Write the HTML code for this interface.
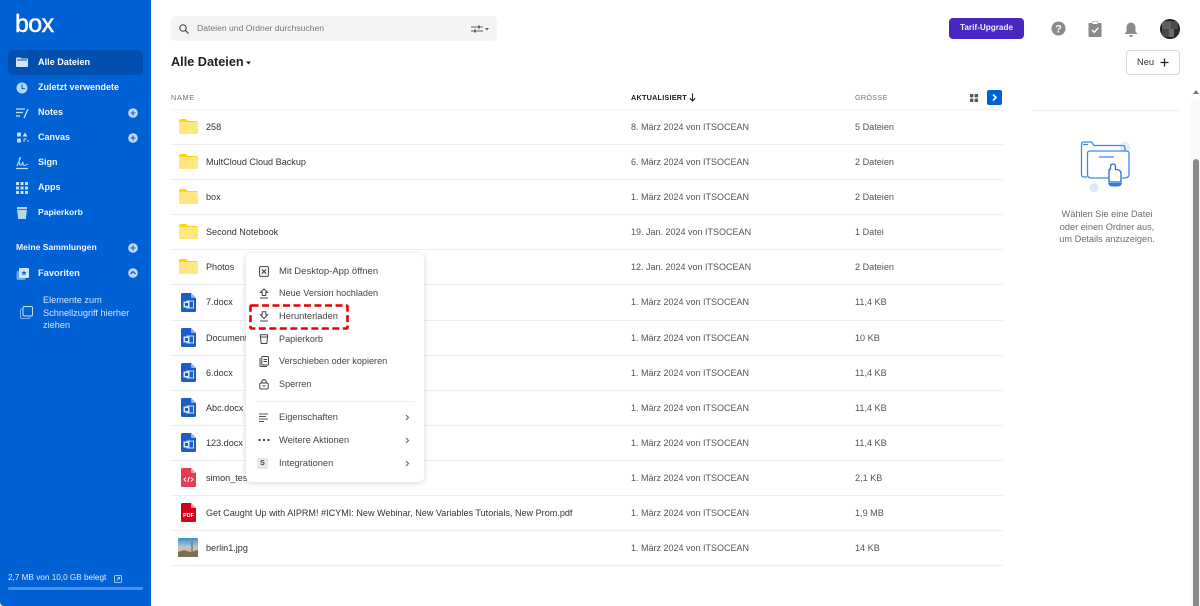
<!DOCTYPE html>
<html lang="de"><head><meta charset="utf-8"><title>Box</title>
<style>
*{box-sizing:border-box}
html,body{margin:0;padding:0;width:1200px;height:606px;overflow:hidden;background:#fff;font-family:"Liberation Sans",sans-serif;color:#222}
.a{position:absolute;white-space:nowrap}
#side{left:0;top:0;width:151px;height:606px;background:#0061d5;border-radius:0 0 0 4px}
.nav{position:absolute;left:38px;color:#f0f5fc;font-size:9px;font-weight:bold;white-space:nowrap;line-height:12px}
.ic{position:absolute}
.rl{position:absolute;left:171px;width:832px;height:1px;background:#eee}
.n{position:absolute;left:206px;font-size:9.08px;color:#333;line-height:12px;white-space:nowrap;margin-top:1px}
.d{position:absolute;left:631px;font-size:9px;color:#555;line-height:12px;white-space:nowrap;margin-top:1px}
.s{position:absolute;left:855px;font-size:9.1px;color:#555;line-height:12px;white-space:nowrap;margin-top:1px}
.m{position:absolute;left:279px;font-size:9.1px;color:#444;line-height:12px;white-space:nowrap}
.f{position:absolute;left:179px;width:19px;height:15px}
.w{position:absolute;left:181px;width:15px;height:19px}
</style></head><body>

<div class="a" id="side"></div>
<div class="a" style="left:15px;top:6px;font-size:25px;font-weight:normal;color:#fff;letter-spacing:-.6px;line-height:36px;-webkit-text-stroke:.5px #fff">box</div>
<div class="a" style="left:8px;top:50px;width:135px;height:25px;background:#0150b0;border-radius:5px"></div>

<svg class="ic" style="left:16px;top:57px" width="12" height="10"><path d="M0 1.500Q0 .5 1 .5H4.500L5.500 1.500H11Q12 1.500 12 2.500V9Q12 10 11 10H1Q0 10 0 9Z" fill="#d4e5f9"/><rect x="1" y="2.500" width="10" height="1" fill="#0150b0"/></svg>
<div class="nav" style="top:56px;color:#fff;font-size:9.1px">Alle Dateien</div>

<svg class="ic" style="left:16px;top:82px" width="12" height="12"><circle cx="6" cy="6" r="5.500" fill="#b9d5f5"/><path d="M6 2.500V6.500H9" stroke="#0061d5" fill="none" stroke-width="1.100"/></svg>
<div class="nav" style="top:81px">Zuletzt verwendete</div>

<svg class="ic" style="left:15px;top:107px" width="14" height="12"><path d="M1 2H10M1 5.500H8M1 9H5M13 2L9 11" stroke="#c9def7" fill="none" stroke-width="1.300"/></svg>
<div class="nav" style="top:106px">Notes</div>
<svg class="ic" style="left:128px;top:108px" width="10" height="10"><circle cx="5" cy="5" r="4.800" fill="#c4daf6"/><path d="M5 2.500V7.500M2.500 5H7.500" stroke="#0061d5" stroke-width="1.100"/></svg>

<svg class="ic" style="left:17px;top:132px" width="12" height="11"><rect x="0" y="0.500" width="4" height="4" rx=".8" fill="#c9def7"/><path d="M8 .5L10.500 4.500H5.500Z" fill="#c9def7"/><rect x="0" y="6.500" width="4" height="4" rx=".8" fill="#c9def7"/><path d="M7 7H9.500M7 7V10M11 8V10" stroke="#c9def7" fill="none"/></svg>
<div class="nav" style="top:131px">Canvas</div>
<svg class="ic" style="left:128px;top:133px" width="10" height="10"><circle cx="5" cy="5" r="4.800" fill="#c4daf6"/><path d="M5 2.500V7.500M2.500 5H7.500" stroke="#0061d5" stroke-width="1.100"/></svg>

<svg class="ic" style="left:15px;top:156px" width="14" height="14"><path d="M2 10Q6 1 5.500 1.500Q3.500 2 4.500 8Q5 10 7 8L8 6V9Q10 10 13 8" stroke="#c9def7" fill="none"/><path d="M1 12.500H13" stroke="#c9def7" stroke-width="1.200"/></svg>
<div class="nav" style="top:156px">Sign</div>

<svg class="ic" style="left:16px;top:182px" width="12" height="12" fill="#c9def7"><rect width="3" height="3"/><rect x="4.500" width="3" height="3"/><rect x="9" width="3" height="3"/><rect y="4.500" width="3" height="3"/><rect x="4.500" y="4.500" width="3" height="3"/><rect x="9" y="4.500" width="3" height="3"/><rect y="9" width="3" height="3"/><rect x="4.500" y="9" width="3" height="3"/><rect x="9" y="9" width="3" height="3"/></svg>
<div class="nav" style="top:181px">Apps</div>

<svg class="ic" style="left:17px;top:207px" width="10" height="12"><path d="M0 0H10V2.500L8.800 12H1.200L0 2.500Z" fill="#b9d5f5"/><rect y="2" width="10" height=".8" fill="#0061d5"/></svg>
<div class="nav" style="top:206px;font-size:8.6px">Papierkorb</div>

<div class="nav" style="left:16px;top:241px;font-size:8.6px">Meine Sammlungen</div>
<svg class="ic" style="left:128px;top:243px" width="10" height="10"><circle cx="5" cy="5" r="4.800" fill="#c4daf6"/><path d="M5 2.500V7.500M2.500 5H7.500" stroke="#0061d5" stroke-width="1.100"/></svg>

<svg class="ic" style="left:16px;top:268px" width="13" height="13"><rect x="0.500" y="3" width="9" height="9" rx="1.500" fill="#6fa3e6"/><rect x="3" y="0" width="10" height="10" rx="1" fill="#d4e5f9"/><path d="M8 2.200L8.800 4.200H10.800L9.200 5.400L9.800 7.400L8 6.200L6.200 7.400L6.800 5.400L5.200 4.200H7.200Z" fill="#0061d5"/></svg>
<div class="nav" style="top:267px;font-size:9.3px">Favoriten</div>
<svg class="ic" style="left:128px;top:268px" width="10" height="10"><circle cx="5" cy="5" r="4.800" fill="#c4daf6"/><path d="M2.500 6L5 3.500L7.500 6" stroke="#0061d5" fill="none" stroke-width="1.300"/></svg>

<svg class="ic" style="left:20px;top:306px" width="13" height="13"><rect x="3" y=".5" width="9.500" height="9.500" rx="1.500" fill="none" stroke="#cfe1f8"/><path d="M3 3H2Q.5 3 .5 4.500V11Q.5 12.500 2 12.500H8.500Q10 12.500 10 11" fill="none" stroke="#7fb0ea"/></svg>
<div class="nav" style="left:43px;top:294px;font-weight:normal;color:#d4e5f9;font-size:9.2px;line-height:12.700px">Elemente zum<br>Schnellzugriff hierher<br>ziehen</div>

<div class="nav" style="left:8px;top:572px;font-weight:normal;color:#e3eefb;font-size:8.2px">2,7 MB von 10,0 GB belegt</div>
<svg class="ic" style="left:114px;top:575px" width="8" height="8"><rect x=".5" y=".5" width="7" height="7" rx="1" fill="none" stroke="#d4e5f9" stroke-width=".8"/><path d="M2.500 5.500L5.500 2.500M3.500 2.500H5.500V4.500" fill="none" stroke="#d4e5f9" stroke-width=".8"/></svg>
<div class="a" style="left:8px;top:587px;width:135px;height:3px;background:#4d90e2;border-radius:2px"></div>

<!-- search -->
<div class="a" style="left:171px;top:16px;width:326px;height:25px;background:#f4f4f4;border-radius:5px"></div>
<svg class="ic" style="left:179px;top:24px" width="10" height="10"><circle cx="4" cy="4" r="3.200" fill="none" stroke="#555" stroke-width="1.200"/><path d="M6.500 6.500L9.500 9.500" stroke="#555" stroke-width="1.300"/></svg>
<div class="a" style="left:197px;top:22px;font-size:8.6px;color:#777;line-height:12px">Dateien und Ordner durchsuchen</div>
<svg class="ic" style="left:471px;top:25px" width="19" height="8"><path d="M0 2H12M0 6H12" stroke="#666"/><rect x="7" y=".5" width="2" height="3" fill="#666"/><rect x="3" y="4.500" width="2" height="3" fill="#666"/><path d="M14 3H18L16 5.500Z" fill="#666"/></svg>

<div class="a" style="left:171px;top:53px;font-size:12.7px;font-weight:bold;color:#222;line-height:18px">Alle Dateien</div>
<svg class="ic" style="left:246px;top:61px" width="5" height="4"><path d="M0 .5H5L2.500 3.500Z" fill="#222"/></svg>

<!-- top right -->
<div class="a" style="left:949px;top:18px;width:75px;height:21px;background:#4826c2;border-radius:4px;color:#f1eefb;font-size:8.2px;font-weight:bold;text-align:center;line-height:20px">Tarif-Upgrade</div>
<svg class="ic" style="left:1051px;top:21px" width="15" height="15"><circle cx="7.500" cy="7.500" r="7" fill="#8a8a8a"/><text x="7.500" y="11.500" font-family="Liberation Sans" font-weight="bold" font-size="11" fill="#fff" text-anchor="middle">?</text></svg>
<svg class="ic" style="left:1088px;top:21px" width="14" height="16"><path d="M1.500 2H4V0.500H10V2H12.500Q13.500 2 13.500 3V15Q13.500 16 12.500 16H1.500Q.5 16 .5 15V3Q.5 2 1.500 2Z" fill="#8a8a8a"/><rect x="4.500" y="1" width="5" height="2" fill="#fff"/><path d="M4 9L6.300 11.300L10.300 6.800" fill="none" stroke="#fff" stroke-width="1.400"/></svg>
<svg class="ic" style="left:1124px;top:22px" width="14" height="15"><path d="M7 0.500Q11.500 1 11.500 6V9.500L13.500 12H.5L2.500 9.500V6Q2.500 1 7 0.500Z" fill="#8a8a8a"/><path d="M5 13H9Q8.500 15 7 15Q5.500 15 5 13Z" fill="#8a8a8a"/></svg>
<svg class="ic" style="left:1160px;top:19px" width="20" height="20"><defs><clipPath id="av"><circle cx="10" cy="10" r="10"/></clipPath></defs><g clip-path="url(#av)"><rect width="20" height="20" fill="#1c1c1c"/><rect x="2" y="2" width="9" height="8" fill="#5e5e5e"/><rect x="11" y="2" width="7" height="8" fill="#4a4a4a"/><rect x="2" y="10" width="7" height="8" fill="#484848"/><rect x="9" y="10" width="5" height="8" fill="#6a6a6a"/><rect x="14" y="10" width="5" height="6" fill="#2a2a2a"/></g></svg>

<div class="a" style="left:1126px;top:50px;width:54px;height:25px;background:#fff;border:1px solid #d8d8d8;border-radius:4px"></div>
<div class="a" style="left:1137px;top:56px;font-size:9.3px;color:#333;line-height:12px">Neu</div>
<svg class="ic" style="left:1160px;top:58px" width="9" height="9"><path d="M4.500 .5V8.500M.5 4.500H8.500" stroke="#222" stroke-width="1.300"/></svg>

<!-- table header -->
<div class="a" style="left:171px;top:92px;font-size:7.4px;color:#777;letter-spacing:.6px;line-height:12px">NAME</div>
<div class="a" style="left:631px;top:92px;font-size:7.3px;font-weight:bold;color:#222;letter-spacing:.2px;line-height:12px">AKTUALISIERT</div>
<svg class="ic" style="left:689px;top:93px" width="7" height="9"><path d="M3.500 .5V8M.8 5.300L3.500 8L6.200 5.300" fill="none" stroke="#222" stroke-width="1.100"/></svg>
<div class="a" style="left:855px;top:92px;font-size:7.2px;color:#777;letter-spacing:.3px;line-height:12px">GRÖSSE</div>
<svg class="ic" style="left:970px;top:94px" width="8" height="8" fill="#555"><rect width="3.400" height="3.400" rx=".5"/><rect x="4.600" width="3.400" height="3.400" rx=".5"/><rect y="4.600" width="3.400" height="3.400" rx=".5"/><rect x="4.600" y="4.600" width="3.400" height="3.400" rx=".5"/></svg>
<div class="a" style="left:987px;top:90px;width:15px;height:15px;background:#0061d5;border-radius:2px"></div>
<svg class="ic" style="left:987px;top:90px" width="15" height="15"><path d="M6 4.500L9 7.500L6 10.500" fill="none" stroke="#fff" stroke-width="1.600"/></svg>

<!-- right panel -->
<div class="a" style="left:1032px;top:110px;width:148px;height:1px;background:#eee"></div>
<svg class="ic" style="left:1080px;top:140px" width="52" height="54">
<circle cx="45" cy="7" r="5.500" fill="#e5effb"/><circle cx="14" cy="47.500" r="4.500" fill="#dde9f9"/>
<path d="M7 37H4Q1.500 37 1.500 34.500V4Q1.500 2 4 2H11.500L14 5.500H43Q45 5.500 45 8.500V11" fill="none" stroke="#3d8ae6" stroke-width="1.300"/>
<path d="M31 38H11Q7.500 38 7.500 34.500V13.500Q7.500 11 10 11H46Q49 11 49 13.500V34.500Q49 38 44 38H42" fill="none" stroke="#3d8ae6" stroke-width="1.300"/>
<path d="M19 17H34M3 4.500H8" stroke="#3d8ae6" stroke-width="1.200"/>
<path d="M29 42V31Q29 29 30.500 29V26Q31 24 33 24Q35 24 35.500 26V29.500Q40 29.500 41 32.500V42Z" fill="#fff" stroke="#1e6fd0" stroke-width="1.300"/>
<path d="M28 43H42Q41 46.500 38 46.500H32Q29 46.500 28 43Z" fill="#2f7fe0"/>
</svg>
<div class="a" style="left:1032px;top:208px;width:150px;text-align:center;font-size:9.2px;color:#6d6d6d;line-height:12.700px">Wählen Sie eine Datei<br>oder einen Ordner aus,<br>um Details anzuzeigen.</div>

<!-- scrollbar -->
<div class="a" style="left:1191px;top:100px;width:9px;height:506px;background:#fafafa"></div>
<svg class="ic" style="left:1193px;top:90px" width="6" height="5"><path d="M0 4H6L3 0Z" fill="#777"/></svg>
<div class="a" style="left:1193px;top:159px;width:5.500px;height:447px;background:#8a8a8a;border-radius:3px 3px 0 0"></div>

<!-- row lines -->
<div class="rl" style="top:109px;background:#f2f2f2"></div>
<div class="rl" style="top:144px"></div><div class="rl" style="top:179px"></div><div class="rl" style="top:214px"></div><div class="rl" style="top:249px"></div><div class="rl" style="top:284px"></div><div class="rl" style="top:320px"></div><div class="rl" style="top:355px"></div><div class="rl" style="top:390px"></div><div class="rl" style="top:425px"></div><div class="rl" style="top:460px"></div><div class="rl" style="top:495px"></div><div class="rl" style="top:530px"></div><div class="rl" style="top:565px"></div>

<!-- folder icons -->
<svg class="f" style="top:119px" viewBox="0 0 19 15"><path d="M0 2Q0 0 2 0H7L9 2H17Q19 2 19 4V13Q19 15 17 15H2Q0 15 0 13Z" fill="#ffd700"/><path d="M0 4Q0 3 1 3H18Q19 3 19 4V13Q19 15 17 15H2Q0 15 0 13Z" fill="#ffe680"/></svg>
<svg class="f" style="top:154px" viewBox="0 0 19 15"><path d="M0 2Q0 0 2 0H7L9 2H17Q19 2 19 4V13Q19 15 17 15H2Q0 15 0 13Z" fill="#ffd700"/><path d="M0 4Q0 3 1 3H18Q19 3 19 4V13Q19 15 17 15H2Q0 15 0 13Z" fill="#ffe680"/></svg>
<svg class="f" style="top:189px" viewBox="0 0 19 15"><path d="M0 2Q0 0 2 0H7L9 2H17Q19 2 19 4V13Q19 15 17 15H2Q0 15 0 13Z" fill="#ffd700"/><path d="M0 4Q0 3 1 3H18Q19 3 19 4V13Q19 15 17 15H2Q0 15 0 13Z" fill="#ffe680"/></svg>
<svg class="f" style="top:224px" viewBox="0 0 19 15"><path d="M0 2Q0 0 2 0H7L9 2H17Q19 2 19 4V13Q19 15 17 15H2Q0 15 0 13Z" fill="#ffd700"/><path d="M0 4Q0 3 1 3H18Q19 3 19 4V13Q19 15 17 15H2Q0 15 0 13Z" fill="#ffe680"/></svg>
<svg class="f" style="top:259px" viewBox="0 0 19 15"><path d="M0 2Q0 0 2 0H7L9 2H17Q19 2 19 4V13Q19 15 17 15H2Q0 15 0 13Z" fill="#ffd700"/><path d="M0 4Q0 3 1 3H18Q19 3 19 4V13Q19 15 17 15H2Q0 15 0 13Z" fill="#ffe680"/></svg>

<!-- word icons -->
<svg class="w" style="top:293px" viewBox="0 0 15 19"><path d="M1.500 0H10L15 5V17.500Q15 19 13.500 19H1.500Q0 19 0 17.500V1.500Q0 0 1.500 0Z" fill="#1a5dc8"/><path d="M10 0L15 5H11Q10 5 10 4Z" fill="#8fb4ea"/><rect x="6" y="8" width="6.500" height="7" fill="none" stroke="#cfe0f7"/><rect x="2.500" y="8.500" width="6" height="6" fill="#dbe8fa"/><rect x="4" y="10" width="3" height="3" fill="#1a5dc8"/></svg>
<svg class="w" style="top:328px" viewBox="0 0 15 19"><path d="M1.500 0H10L15 5V17.500Q15 19 13.500 19H1.500Q0 19 0 17.500V1.500Q0 0 1.500 0Z" fill="#1a5dc8"/><path d="M10 0L15 5H11Q10 5 10 4Z" fill="#8fb4ea"/><rect x="6" y="8" width="6.500" height="7" fill="none" stroke="#cfe0f7"/><rect x="2.500" y="8.500" width="6" height="6" fill="#dbe8fa"/><rect x="4" y="10" width="3" height="3" fill="#1a5dc8"/></svg>
<svg class="w" style="top:363px" viewBox="0 0 15 19"><path d="M1.500 0H10L15 5V17.500Q15 19 13.500 19H1.500Q0 19 0 17.500V1.500Q0 0 1.500 0Z" fill="#1a5dc8"/><path d="M10 0L15 5H11Q10 5 10 4Z" fill="#8fb4ea"/><rect x="6" y="8" width="6.500" height="7" fill="none" stroke="#cfe0f7"/><rect x="2.500" y="8.500" width="6" height="6" fill="#dbe8fa"/><rect x="4" y="10" width="3" height="3" fill="#1a5dc8"/></svg>
<svg class="w" style="top:398px" viewBox="0 0 15 19"><path d="M1.500 0H10L15 5V17.500Q15 19 13.500 19H1.500Q0 19 0 17.500V1.500Q0 0 1.500 0Z" fill="#1a5dc8"/><path d="M10 0L15 5H11Q10 5 10 4Z" fill="#8fb4ea"/><rect x="6" y="8" width="6.500" height="7" fill="none" stroke="#cfe0f7"/><rect x="2.500" y="8.500" width="6" height="6" fill="#dbe8fa"/><rect x="4" y="10" width="3" height="3" fill="#1a5dc8"/></svg>
<svg class="w" style="top:433px" viewBox="0 0 15 19"><path d="M1.500 0H10L15 5V17.500Q15 19 13.500 19H1.500Q0 19 0 17.500V1.500Q0 0 1.500 0Z" fill="#1a5dc8"/><path d="M10 0L15 5H11Q10 5 10 4Z" fill="#8fb4ea"/><rect x="6" y="8" width="6.500" height="7" fill="none" stroke="#cfe0f7"/><rect x="2.500" y="8.500" width="6" height="6" fill="#dbe8fa"/><rect x="4" y="10" width="3" height="3" fill="#1a5dc8"/></svg>
<svg class="w" style="top:468px" viewBox="0 0 15 19"><path d="M1.500 0H10L15 5V17.500Q15 19 13.500 19H1.500Q0 19 0 17.500V1.500Q0 0 1.500 0Z" fill="#e33d55"/><path d="M10 0L15 5H11Q10 5 10 4Z" fill="#f3a3ae"/><path d="M5 9.500L3 11.500L5 13.500M10 9.500L12 11.500L10 13.500M8.300 9L6.700 14" fill="none" stroke="#fff"/></svg>
<svg class="w" style="top:503px" viewBox="0 0 15 19"><path d="M1.500 0H10L15 5V17.500Q15 19 13.500 19H1.500Q0 19 0 17.500V1.500Q0 0 1.500 0Z" fill="#d0021b"/><path d="M10 0L15 5H11Q10 5 10 4Z" fill="#ee9aa4"/><text x="7.500" y="14" font-family="Liberation Sans" font-weight="bold" font-size="5.400" fill="#fff" text-anchor="middle">PDF</text></svg>
<svg class="ic" style="left:178px;top:538px" width="20" height="19"><defs><linearGradient id="sky" x1="0" y1="0" x2="0" y2="1"><stop offset="0" stop-color="#3f8dc4"/><stop offset=".45" stop-color="#a9c9d8"/><stop offset=".65" stop-color="#e3b48a"/><stop offset="1" stop-color="#8a7a62"/></linearGradient></defs><rect width="20" height="19" rx="1" fill="url(#sky)"/><path d="M0 19V14L6 12L12 14L20 12V19Z" fill="#7d6e58"/><path d="M14 4V13" stroke="#5a5a5a"/></svg>

<!-- names -->
<div class="n" style="top:120px">258</div>
<div class="n" style="top:155px">MultCloud Cloud Backup</div>
<div class="n" style="top:190px">box</div>
<div class="n" style="top:225px">Second Notebook</div>
<div class="n" style="top:260px">Photos</div>
<div class="n" style="top:295px">7.docx</div>
<div class="n" style="top:331px">Document.docx</div>
<div class="n" style="top:366px">6.docx</div>
<div class="n" style="top:401px">Abc.docx</div>
<div class="n" style="top:436px">123.docx</div>
<div class="n" style="top:471px">simon_test.html</div>
<div class="n" style="top:506px">Get Caught Up with AIPRM! #ICYMI: New Webinar, New Variables Tutorials, New Prom.pdf</div>
<div class="n" style="top:541px">berlin1.jpg</div>

<div class="d" style="top:120px">8. März 2024 von ITSOCEAN</div>
<div class="d" style="top:155px">6. März 2024 von ITSOCEAN</div>
<div class="d" style="top:190px">1. März 2024 von ITSOCEAN</div>
<div class="d" style="top:225px">19. Jan. 2024 von ITSOCEAN</div>
<div class="d" style="top:260px">12. Jan. 2024 von ITSOCEAN</div>
<div class="d" style="top:295px">1. März 2024 von ITSOCEAN</div>
<div class="d" style="top:331px">1. März 2024 von ITSOCEAN</div>
<div class="d" style="top:366px">1. März 2024 von ITSOCEAN</div>
<div class="d" style="top:401px">1. März 2024 von ITSOCEAN</div>
<div class="d" style="top:436px">1. März 2024 von ITSOCEAN</div>
<div class="d" style="top:471px">1. März 2024 von ITSOCEAN</div>
<div class="d" style="top:506px">1. März 2024 von ITSOCEAN</div>
<div class="d" style="top:541px">1. März 2024 von ITSOCEAN</div>

<div class="s" style="top:120px">5 Dateien</div>
<div class="s" style="top:155px">2 Dateien</div>
<div class="s" style="top:190px">2 Dateien</div>
<div class="s" style="top:225px">1 Datei</div>
<div class="s" style="top:260px">2 Dateien</div>
<div class="s" style="top:295px">11,4 KB</div>
<div class="s" style="top:331px">10 KB</div>
<div class="s" style="top:366px">11,4 KB</div>
<div class="s" style="top:401px">11,4 KB</div>
<div class="s" style="top:436px">11,4 KB</div>
<div class="s" style="top:471px">2,1 KB</div>
<div class="s" style="top:506px">1,9 MB</div>
<div class="s" style="top:541px">14 KB</div>

<!-- context menu -->
<div class="a" style="left:246px;top:253px;width:178px;height:229px;background:#fff;border-radius:5px;box-shadow:0 1px 6px rgba(0,0,0,.18)"></div>

<svg class="ic" style="left:259px;top:266px" width="10" height="11"><rect x=".5" y=".5" width="9" height="10" rx="1.500" fill="#eee" stroke="#555"/><path d="M3 3.500L7 7.500M7 3.500L3 7.500" stroke="#444"/></svg>
<div class="m" style="top:266px;font-size:9.5px">Mit Desktop-App öffnen</div>
<svg class="ic" style="left:259px;top:288px" width="10" height="11" fill="none" stroke="#444"><path d="M5 .8L8.500 4.500H6.800V7.500H3.200V4.500H1.500Z"/><path d="M1 10H9"/></svg>
<div class="m" style="top:287px">Neue Version hochladen</div>
<svg class="ic" style="left:259px;top:311px" width="10" height="11" fill="none" stroke="#444"><path d="M5 7.500L8.500 3.800H6.800V.8H3.200V3.800H1.500Z"/><path d="M1 10H9"/></svg>
<div class="m" style="top:310px;font-size:9.3px">Herunterladen</div>
<svg class="ic" style="left:259px;top:334px" width="10" height="10" fill="none" stroke="#444"><path d="M1 .8H9M1.200 .8L2.200 9.500H7.800L8.800 .8M1.500 3H8.500"/></svg>
<div class="m" style="top:333px">Papierkorb</div>
<svg class="ic" style="left:259px;top:356px" width="10" height="11" fill="none" stroke="#444"><path d="M1 2V9.500Q1 10.500 2 10.500H8"/><rect x="2.800" y=".5" width="6.700" height="8.500" rx="1"/><path d="M4.500 3.500H8M4.500 5.500H8"/></svg>
<div class="m" style="top:355px">Verschieben oder kopieren</div>
<svg class="ic" style="left:259px;top:379px" width="10" height="11" fill="none" stroke="#444"><rect x=".8" y="4" width="8.400" height="6" rx="1.500"/><path d="M2.800 4V3Q2.800 .8 5 .8Q7.200 .8 7.200 3V4M3.500 7H6.500"/></svg>
<div class="m" style="top:378px">Sperren</div>

<div class="a" style="left:256px;top:401px;width:158px;height:1px;background:#eee"></div>

<svg class="ic" style="left:259px;top:413px" width="10" height="9" stroke="#555"><path d="M0 1H9M0 3.500H7M0 6H9M0 8.500H5"/></svg>
<div class="m" style="top:411px;font-size:9.3px">Eigenschaften</div>
<svg class="ic" style="left:405px;top:414px" width="5" height="7"><path d="M1 1L3.500 3.500L1 6" fill="none" stroke="#666" stroke-width="1.100"/></svg>
<svg class="ic" style="left:258px;top:438px" width="12" height="4" fill="#333"><circle cx="1.500" cy="2" r="1.100"/><circle cx="6" cy="2" r="1.100"/><circle cx="10.500" cy="2" r="1.100"/></svg>
<div class="m" style="top:434px;font-size:9.3px">Weitere Aktionen</div>
<svg class="ic" style="left:405px;top:437px" width="5" height="7"><path d="M1 1L3.500 3.500L1 6" fill="none" stroke="#666" stroke-width="1.100"/></svg>
<div class="a" style="left:257px;top:458px;width:11px;height:11px;background:#e8e8e8;border-radius:2px;font-size:7px;font-weight:bold;color:#444;text-align:center;line-height:11px">S</div>
<div class="m" style="top:457px;font-size:9.3px">Integrationen</div>
<svg class="ic" style="left:405px;top:460px" width="5" height="7"><path d="M1 1L3.500 3.500L1 6" fill="none" stroke="#666" stroke-width="1.100"/></svg>

<!-- red dashed highlight -->
<svg class="ic" style="left:249px;top:304px" width="100" height="26"><rect x="1.500" y="1.500" width="97" height="23" rx="1" fill="none" stroke="#e60000" stroke-width="2.600" stroke-dasharray="7 3.500"/></svg>

</body></html>
